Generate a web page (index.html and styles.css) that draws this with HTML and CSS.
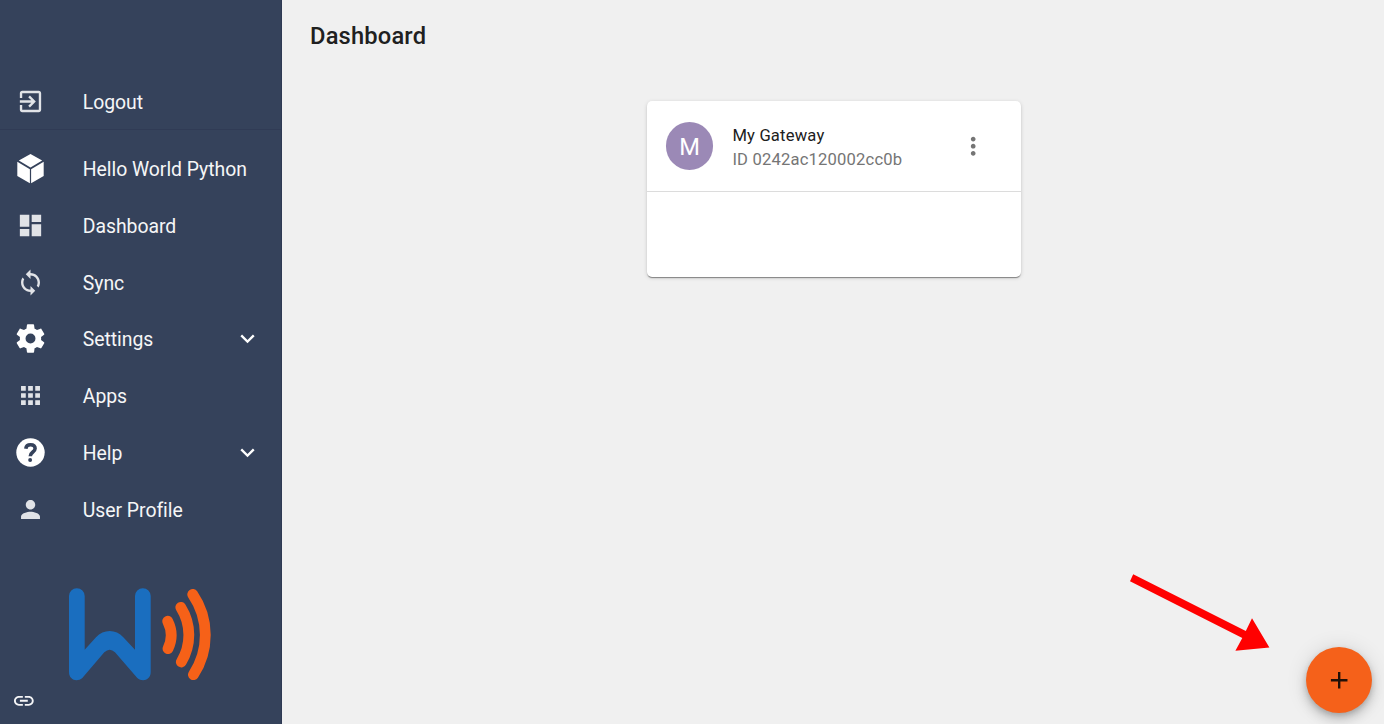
FILE: index.html
```html
<!DOCTYPE html>
<html lang="en">
<head>
<meta charset="utf-8">
<title>Dashboard</title>
<link rel="stylesheet" href="styles.css">
</head>
<body>
<div class="app">
  <nav class="sidebar">
    <a class="item item-logout"><svg class="icon soft" viewBox="0 0 24 24"><path d="M10.09 15.59L11.5 17l5-5-5-5-1.41 1.41L12.67 11H3v2h9.67l-2.58 2.59zM19 3H5c-1.11 0-2 .9-2 2v4h2V5h14v14H5v-4H3v4c0 1.1.89 2 2 2h14c1.1 0 2-.9 2-2V5c0-1.100-.9-2-2-2z"/></svg><span class="label">Logout</span></a>
    <div class="menu">
      <a class="item"><svg class="icon" viewBox="0 0 28 28"><path d="M14-.4L25.500 6 14 13 2.500 6zM1 7.300L13.400 14.800V28.500L1 21.500zM27 7.300L14.600 14.800V28.500L27 21.500z"/></svg><span class="label">Hello World Python</span></a>
      <a class="item"><svg class="icon soft" viewBox="0 0 24 24"><path d="M3 13h8V3H3v10zm0 8h8v-6H3v6zm10 0h8V11h-8v10zm0-18v6h8V3h-8z"/></svg><span class="label">Dashboard</span></a>
      <a class="item"><svg class="icon soft" viewBox="0 0 24 24"><path d="M12 4V1L8 5l4 4V6c3.310 0 6 2.690 6 6 0 1.010-.25 1.970-.7 2.800l1.460 1.460C19.540 15.030 20 13.570 20 12c0-4.420-3.580-8-8-8zm0 14c-3.310 0-6-2.690-6-6 0-1.010.25-1.970.7-2.800L5.240 7.740C4.460 8.970 4 10.430 4 12c0 4.420 3.580 8 8 8v3l4-4-4-4v3z"/></svg><span class="label">Sync</span></a>
      <a class="item"><svg class="icon" viewBox="2 2 20 20"><path d="M12 15.500A3.500 3.500 0 0 1 8.500 12 3.500 3.500 0 0 1 12 8.500a3.500 3.500 0 0 1 3.500 3.500 3.500 3.500 0 0 1-3.500 3.500m7.430-2.530c.04-.32.07-.64.07-.97s-.03-.66-.07-1l2.110-1.630c.19-.15.24-.42.12-.64l-2-3.460c-.12-.22-.39-.31-.61-.22l-2.490 1c-.52-.39-1.060-.73-1.690-.98l-.37-2.650A.506.506 0 0 0 14 2h-4c-.25 0-.46.18-.5.42l-.37 2.650c-.63.25-1.170.59-1.690.98l-2.490-1c-.22-.09-.49 0-.61.22l-2 3.460c-.13.22-.07.49.12.64L4.570 11c-.04.34-.07.67-.07 1s.03.65.07.97l-2.110 1.660c-.19.15-.25.42-.12.64l2 3.460c.12.22.39.3.61.22l2.490-1.010c.52.4 1.060.74 1.690.99l.37 2.650c.04.24.25.42.5.42h4c.25 0 .46-.18.5-.42l.37-2.650c.63-.26 1.170-.59 1.690-.99l2.490 1.010c.22.08.49 0 .61-.22l2-3.460c.12-.22.07-.49-.12-.64z"/></svg><span class="label">Settings</span><svg class="chevron" viewBox="0 0 24 24"><path d="M16.590 8.590L12 13.170 7.410 8.590 6 10l6 6 6-6z"/></svg></a>
      <a class="item"><svg class="icon soft" viewBox="0 0 24 24"><path d="M4 8h4V4H4v4zm6 12h4v-4h-4v4zm-6 0h4v-4H4v4zm0-6h4v-4H4v4zm6 0h4v-4h-4v4zm6-10v4h4V4h-4zm-6 4h4V4h-4v4zm6 6h4v-4h-4v4zm0 6h4v-4h-4v4z"/></svg><span class="label">Apps</span></a>
      <a class="item"><svg class="icon" viewBox="0 0 24 24"><circle cx="12" cy="12" r="12"/><path class="question" d="M8 8.800C8.300 6.600 9.800 5.500 12 5.500c2.300 0 3.900 1.200 3.900 3.200 0 3-4.100 2.800-4.100 6.500"/><circle class="question-dot" cx="11.700" cy="18.400" r="1.650"/></svg><span class="label">Help</span><svg class="chevron" viewBox="0 0 24 24"><path d="M16.590 8.590L12 13.170 7.410 8.590 6 10l6 6 6-6z"/></svg></a>
      <a class="item"><svg class="icon soft" viewBox="0 0 24 24"><path d="M12 12c2.210 0 4-1.790 4-4s-1.790-4-4-4-4 1.790-4 4 1.790 4 4 4zm0 2c-2.670 0-8 1.340-8 4v2h16v-2c0-2.660-5.330-4-8-4z"/></svg><span class="label">User Profile</span></a>
    </div>
    <svg class="logo" viewBox="68 587 144 94">
      <path class="logo-w" d="M69 596a7.850 7.850 0 0 1 15.700 0V649.700L96 637.300C103.500 629 116 629 123.300 637.300L135 649.700V596a7.850 7.850 0 0 1 15.700 0V672C150.700 680 142.500 682.500 137.300 678L115 652.200Q109.700 647.200 104.300 652.200L82.300 678C77 682.500 69 680 69 672z"/>
      <path class="logo-wave" d="M167.700 621.200A31 31 0 0 1 168 648.600M180.800 607.300A52 52 0 0 1 181.300 662M192.700 594.400A72 72 0 0 1 193.400 674.700"/>
    </svg>
    <svg class="link" viewBox="0 0 24 24"><path d="M3.900 12c0-1.710 1.390-3.100 3.100-3.100h4V7H7c-2.760 0-5 2.240-5 5s2.240 5 5 5h4v-1.900H7c-1.710 0-3.100-1.390-3.100-3.100zM8 13h8v-2H8v2zm9-6h-4v1.900h4c1.710 0 3.100 1.390 3.100 3.100s-1.390 3.100-3.100 3.100h-4V17h4c2.760 0 5-2.240 5-5s-2.240-5-5-5z"/></svg>
  </nav>
  <main class="content">
    <h1 class="title">Dashboard</h1>
    <section class="card">
      <header class="card-header">
        <div class="avatar">M</div>
        <div class="card-text">
          <div class="name">My Gateway</div>
          <div class="id">ID 0242ac120002cc0b</div>
        </div>
        <svg class="more" viewBox="0 0 24 24"><path d="M12 8c1.100 0 2-.9 2-2s-.9-2-2-2-2 .9-2 2 .9 2 2 2zm0 2c-1.100 0-2 .9-2 2s.9 2 2 2 2-.9 2-2-.9-2-2-2zm0 6c-1.100 0-2 .9-2 2s.9 2 2 2 2-.9 2-2-.9-2-2-2z"/></svg>
      </header>
    </section>
  </main>
  <svg class="arrow" viewBox="0 0 140 78"><path d="M3.200 .3L115.800 57 122 44.200 139.400 73.400 105.400 76.800 112.300 64 0 7.300z"/></svg>
  <button class="fab" aria-label="Add"><svg class="plus" viewBox="0 0 24 24"><path d="M19 13h-6v6h-2v-6H5v-2h6V5h2v6h6v2z"/></svg></button>
</div>
</body>
</html>
```
FILE: styles.css
```css
* { box-sizing: border-box; }

body {
  margin: 0;
  background: #f0f0f0;
  font-family: Roboto, "Liberation Sans", sans-serif;
}

.app {
  position: relative;
  display: flex;
  width: 100%;
  height: 724px;
  overflow: hidden;
}

.sidebar {
  display: flex;
  flex-direction: column;
  flex: none;
  width: 282px;
  height: 100%;
  padding-top: 73px;
  background: #35425b;
  border-right: 1px solid #2e3953;
  color: #fff;
}

.item {
  display: flex;
  align-items: center;
  flex: none;
  height: 56.85px;
  padding: 0 19px 0 16px;
}

.item-logout {
  height: 57.400px;
  border-bottom: 1px solid #303b55;
}

.menu { padding-top: 9.600px; }

.icon {
  flex: none;
  width: 29px;
  height: 29px;
  padding: .3px;
  fill: #fff;
  overflow: visible;
}

.soft { fill: #e1e3e7; }

.label {
  flex: 1;
  margin-left: 37.8px;
  padding-top: 3px;
  font-size: 19.4px;
  line-height: 28px;
  letter-spacing: -0.04px;
  color: #f5f6f7;
}

.chevron {
  width: 29px;
  height: 29px;
  padding: .3px;
  fill: #fff;
}

.icon .question {
  fill: none;
  stroke: #35425b;
  stroke-width: 3;
}

.icon .question-dot { fill: #35425b; }

.logo {
  flex: none;
  width: 144px;
  height: 94px;
  margin: 49px 0 0 68px;
}

.logo-w { fill: #1a6ebf; }

.logo-wave {
  fill: none;
  stroke: #f66118;
  stroke-width: 10.8;
  stroke-linecap: round;
}

.link {
  flex: none;
  width: 23.7px;
  height: 23.7px;
  margin: 8px 0 0 11.8px;
  fill: #f5f5f7;
}

.content {
  display: flex;
  flex-direction: column;
  flex: 1;
  padding: 20px 26px 20px 28px;
}

.title {
  margin: 0;
  font-size: 23.7px;
  font-weight: 500;
  line-height: 32px;
  letter-spacing: 0.18px;
  color: #202020;
}

.card {
  align-self: center;
  width: 374px;
  height: 176px;
  margin-top: 49px;
  border-radius: 5px;
  background: #fff;
  box-shadow: 0 2px 1px -1px rgba(0, 0, 0, .25), 0 1px 1px rgba(0, 0, 0, .2), 0 1px 4px rgba(0, 0, 0, .14);
}

.card-header {
  display: flex;
  align-items: center;
  height: 91px;
  padding: 0 34px 0 19px;
  border-bottom: 1px solid #dcdcdc;
}

.avatar {
  width: 47.4px;
  height: 47.4px;
  border-radius: 50%;
  background: #9b89b6;
  color: #fff;
  font-size: 23.7px;
  line-height: 50px;
  text-align: center;
}

.card-text {
  flex: 1;
  margin-left: 19px;
  padding-top: 3px;
  font-size: 16.6px;
  line-height: 24px;
  letter-spacing: 0.18px;
}

.name { color: #202020; }
.id { color: #757575; }

.more {
  width: 28.4px;
  height: 28.4px;
  fill: #757575;
}

.arrow {
  position: absolute;
  left: 1130px;
  top: 574px;
  width: 140px;
  height: 78px;
  fill: #f00;
}

.fab {
  position: absolute;
  right: 12px;
  bottom: 11px;
  display: flex;
  align-items: center;
  justify-content: center;
  width: 66px;
  height: 66px;
  padding: 0;
  border: 0;
  border-radius: 50%;
  background: #f5611a;
  box-shadow: 0 3px 6px -1px rgba(0, 0, 0, .2), 0 7px 12px rgba(0, 0, 0, .14), 0 1px 21px rgba(0, 0, 0, .12);
}

.plus {
  width: 28.4px;
  height: 28.4px;
  fill: #211008;
}
```
